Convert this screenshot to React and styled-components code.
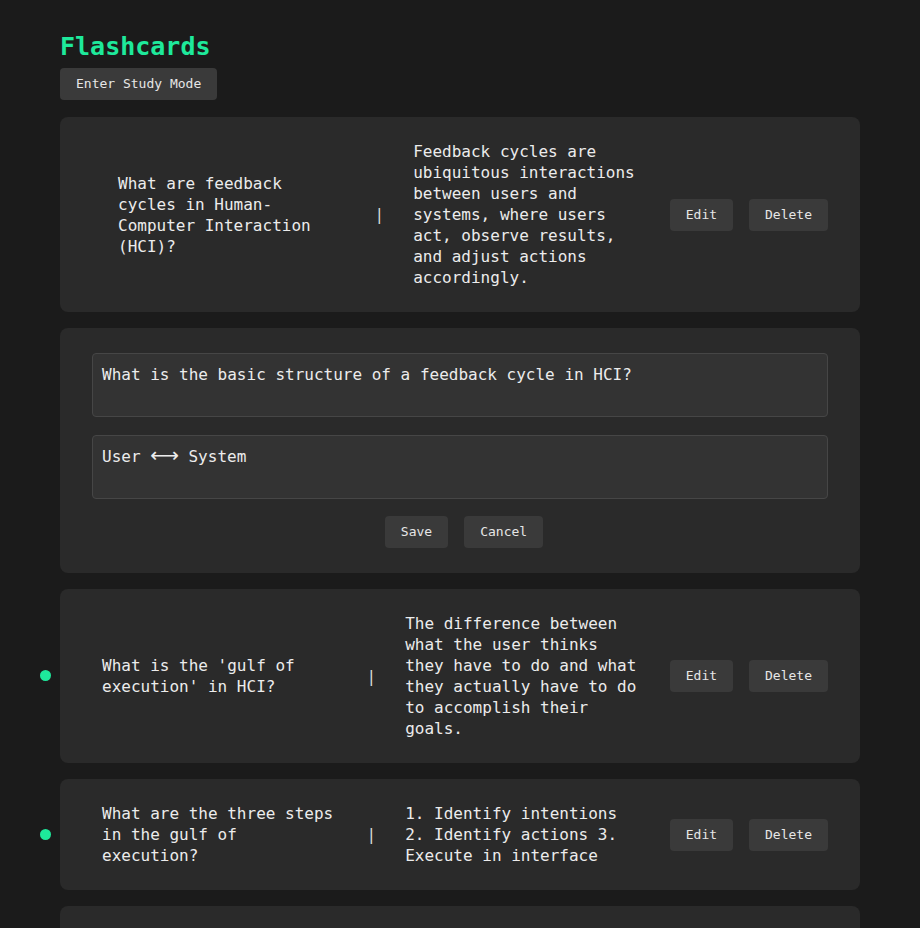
import React from "react";
import styled, { createGlobalStyle } from "styled-components";

const GlobalStyle = createGlobalStyle`
  body {
    margin: 0;
    background: #1b1b1b;
    color: #ececec;
    font-family: "DejaVu Sans Mono", "DejaVu Sans", monospace;
  }
`;

// 스타일 컴포넌트

const Page = styled.div`
  width: 800px;
  margin: 0 auto;
  padding: 32px 0 40px;
`;

const Title = styled.h1`
  margin: 0 0 6px;
  font-size: 25px;
  line-height: 30px;
  font-weight: bold;
  color: #1ee99b;
`;

const Button = styled.button`
  font-family: inherit;
  font-size: 13px;
  line-height: 16px;
  padding: 8px 16px;
  color: #e6e6e6;
  background: #3a3a3a;
  border: none;
  border-radius: 4px;
  cursor: pointer;
`;

const CardList = styled.div`
  margin-top: 17px;
  display: flex;
  flex-direction: column;
  gap: 16px;
`;

const Card = styled.div`
  position: relative;
  background: #2a2a2a;
  border-radius: 8px;
  padding: 24px 32px 24px ${(props) => props.$padLeft || "32px"};
  display: flex;
  align-items: center;
  gap: 29px;
`;

const Dot = styled.span`
  position: absolute;
  left: -20px;
  top: 50%;
  width: 11px;
  height: 11px;
  margin-top: -6px;
  border-radius: 50%;
  background: #1ee99b;
`;

const Side = styled.div`
  flex: 1;
  min-width: 0;
  font-size: 16px;
  line-height: 21px;
`;

const Divider = styled.span`
  font-size: 16px;
  color: #d8d8d8;
`;

const Actions = styled.div`
  display: flex;
  gap: 16px;
`;

const EditCard = styled.div`
  background: #2a2a2a;
  border-radius: 8px;
  padding: 25px 32px;
  display: flex;
  flex-direction: column;
  gap: 18px;
`;

const Field = styled.div`
  box-sizing: border-box;
  width: 100%;
  height: 64px;
  padding: 10px 9px 6px;
  font-size: 16px;
  line-height: 21px;
  color: #ececec;
  background: #333333;
  border: 1px solid #464646;
  border-radius: 4px;
  outline: none;
  overflow: hidden;
`;

const Arrow = styled.span`
  font-family: "DejaVu Sans", sans-serif;
  font-size: 20px;
  line-height: 16px;
`;

const EditActions = styled.div`
  display: flex;
  justify-content: center;
  gap: 16px;
  padding-left: 8px;
  margin-top: -1px;
`;

const cards = [
  {
    id: 1,
    question: "What are feedback cycles in Human-Computer Interaction (HCI)?",
    answer:
      "Feedback cycles are ubiquitous interactions between users and systems, where users act, observe results, and adjust actions accordingly.",
    pad: "58px",
  },
  {
    id: 2,
    question: "What is the basic structure of a feedback cycle in HCI?",
    answer: (
      <>
        User <Arrow>⟷</Arrow> System
      </>
    ),
    editing: true,
  },
  {
    id: 3,
    question: "What is the 'gulf of execution' in HCI?",
    answer:
      "The difference between what the user thinks they have to do and what they actually have to do to accomplish their goals.",
    pad: "42px",
    dot: true,
  },
  {
    id: 4,
    question: "What are the three steps in the gulf of execution?",
    answer: "1. Identify intentions 2. Identify actions 3. Execute in interface",
    pad: "42px",
    dot: true,
  },
  {
    id: 5,
    question: "What is the 'gulf of evaluation' in HCI?",
    answer:
      "The difference between the output of the system and the user's understanding of whether their goals were achieved.",
    pad: "42px",
  },
];

const Flashcard = ({ card }) => {
  if (card.editing) {
    return (
      <EditCard>
        <Field role="textbox" contentEditable suppressContentEditableWarning>
          {card.question}
        </Field>
        <Field role="textbox" contentEditable suppressContentEditableWarning>
          {card.answer}
        </Field>
        <EditActions>
          <Button>Save</Button>
          <Button>Cancel</Button>
        </EditActions>
      </EditCard>
    );
  }

  return (
    <Card $padLeft={card.pad}>
      {card.dot ? <Dot /> : null}
      <Side>{card.question}</Side>
      <Divider>|</Divider>
      <Side>{card.answer}</Side>
      <Actions>
        <Button>Edit</Button>
        <Button>Delete</Button>
      </Actions>
    </Card>
  );
};

export default function App() {
  return (
    <>
      <GlobalStyle />
      <Page>
        <Title>Flashcards</Title>
        <Button>Enter Study Mode</Button>
        <CardList>
          {cards.map((card) => (
            <Flashcard key={card.id} card={card} />
          ))}
        </CardList>
      </Page>
    </>
  );
}
